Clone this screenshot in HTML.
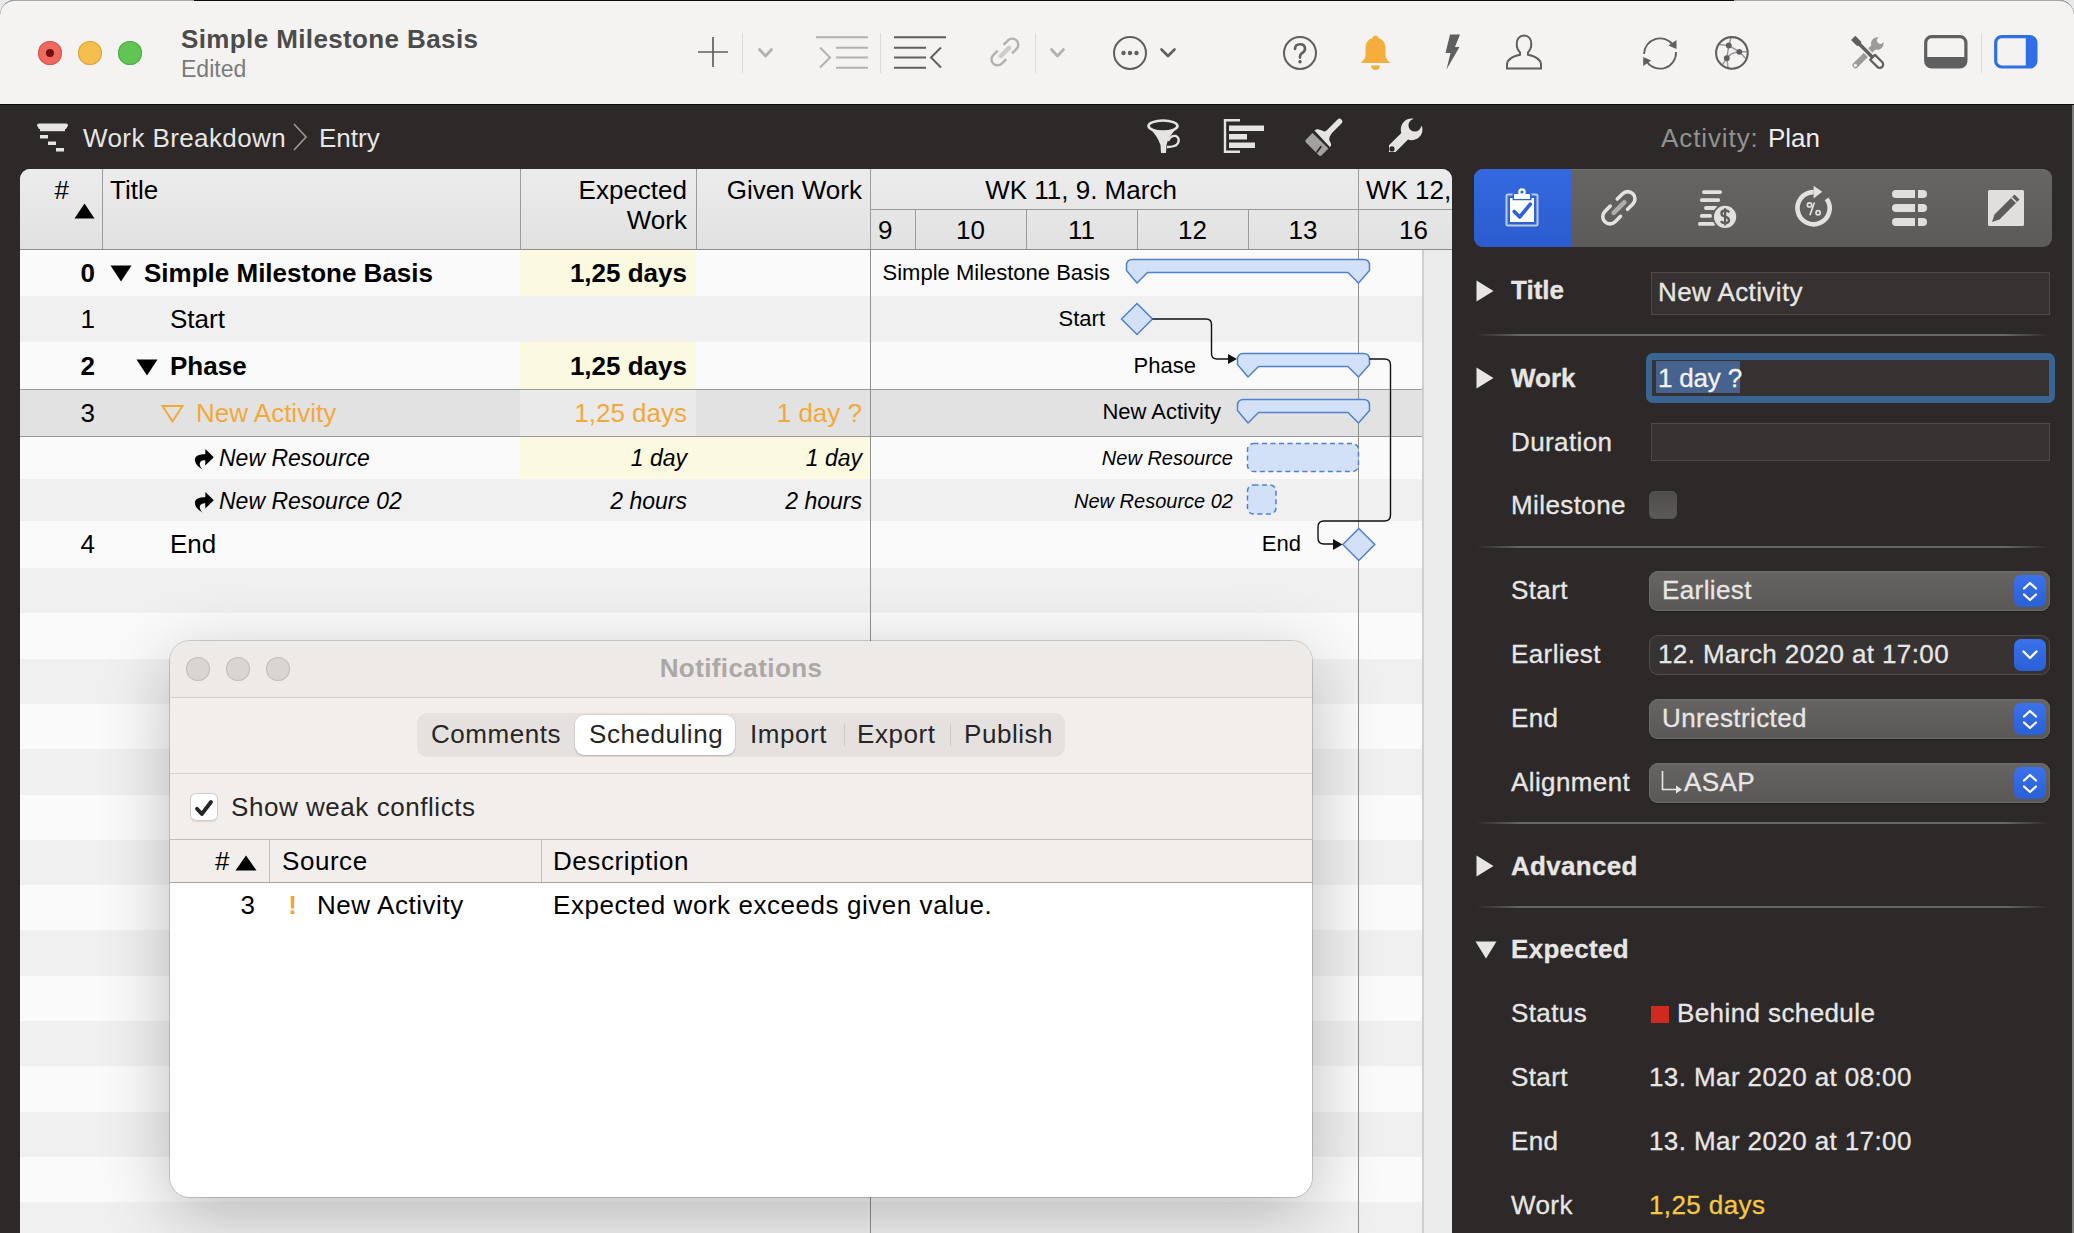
<!DOCTYPE html>
<html><head><meta charset="utf-8">
<style>
*{margin:0;padding:0;box-sizing:border-box}
html,body{width:2074px;height:1233px;overflow:hidden;background:#e9e9e9;font-family:"Liberation Sans",sans-serif}
.a{position:absolute}
.t{position:absolute;white-space:nowrap}
.dk .t{-webkit-text-stroke:0.3px currentColor}
svg{overflow:visible}
</style></head><body>
<div class="a" style="left:0px;top:0px;width:2074px;height:1233px;background:#2c2928;border-radius:15px 15px 0 0;"></div>
<div class="a" style="left:0px;top:0px;width:2074px;height:105px;background:#f5f3f2;border-radius:15px 15px 0 0;border-top:1px solid #a9a9a9;"></div>
<div class="a" style="left:0px;top:104px;width:2074px;height:1px;background:#0b0b0b;"></div>
<div class="a" style="left:194px;top:0px;width:1540px;height:1px;background:#0a0a0a;"></div>
<div class="a" style="left:38px;top:41px;width:24px;height:24px;background:#ee6a5f;border-radius:50%;box-shadow:inset 0 0 0 1px #d5574b;"></div>
<div class="a" style="left:78px;top:41px;width:24px;height:24px;background:#f5bf4f;border-radius:50%;box-shadow:inset 0 0 0 1px #d9a23a;"></div>
<div class="a" style="left:118px;top:41px;width:24px;height:24px;background:#61c554;border-radius:50%;box-shadow:inset 0 0 0 1px #4ea843;"></div>
<div class="a" style="left:46px;top:49px;width:8px;height:8px;background:#6e100b;border-radius:50%;"></div>
<div class="t" style="left:181px;top:25.99px;font-size:26px;line-height:26px;color:#4b4b4b;font-weight:bold;font-style:normal;letter-spacing:0.38px;">Simple Milestone Basis</div>
<div class="t" style="left:181px;top:57.53px;font-size:23px;line-height:23px;color:#7a7a7a;font-weight:normal;font-style:normal;">Edited</div>
<div class="t" style="left:83px;top:124.99px;font-size:26px;line-height:26px;color:#e8e6e5;font-weight:normal;font-style:normal;letter-spacing:0.4px;">Work Breakdown</div>
<div class="t" style="left:319px;top:124.99px;font-size:26px;line-height:26px;color:#e8e6e5;font-weight:normal;font-style:normal;">Entry</div>
<svg class="a" style="left:292px;top:123px;" width="16" height="28" viewBox="0 0 16 28"><path d="M2 1 L14 14 L2 27" fill="none" stroke="#9a9897" stroke-width="1.6"/></svg>
<div class="t" style="left:1661px;top:124.99px;font-size:26px;line-height:26px;color:#939190;font-weight:normal;font-style:normal;letter-spacing:0.9px;">Activity:</div>
<div class="t" style="left:1768px;top:124.99px;font-size:26px;line-height:26px;color:#efeeed;font-weight:normal;font-style:normal;">Plan</div>
<div class="a" style="left:20px;top:169px;width:1432px;height:1064px;background:#f0f0f0;border-radius:10px 10px 0 0;overflow:hidden;"></div>
<svg class="a" style="left:697px;top:36px;" width="32" height="32" viewBox="0 0 32 32"><path d="M16 1V31M1 16H31" stroke="#5f5f5f" stroke-width="1.7"/></svg>
<div class="a" style="left:742px;top:33px;width:1px;height:40px;background:#dcdad9;"></div>
<svg class="a" style="left:758px;top:48px;" width="15" height="10" viewBox="0 0 15 10"><path d="M1.5 1.5L7.5 8L13.5 1.5" fill="none" stroke="#b3b1b0" stroke-width="2.8" stroke-linecap="round" stroke-linejoin="round"/></svg>
<svg class="a" style="left:815px;top:36px;" width="54" height="34" viewBox="0 0 54 34"><path d="M1 1.3H53M21 11.8H53M21 21.6H53M21 31.8H53" stroke="#b3b1b0" stroke-width="2"/><path d="M5 11.5L15 21.5L5 31.5" fill="none" stroke="#b3b1b0" stroke-width="2"/></svg>
<div class="a" style="left:880px;top:33px;width:1px;height:40px;background:#dcdad9;"></div>
<svg class="a" style="left:893px;top:36px;" width="54" height="34" viewBox="0 0 54 34"><path d="M1 1.3H53M1 11.8H33M1 21.6H33M1 31.8H33" stroke="#5f5f5f" stroke-width="2"/><path d="M48 11.5L38 21.5L48 31.5" fill="none" stroke="#5f5f5f" stroke-width="2"/></svg>
<svg class="a" style="left:980px;top:28px;" width="50" height="50" viewBox="0 0 50 50"><g transform="translate(24.4 24.5) rotate(-45) scale(0.83)" fill="none"><path d="M5.8 -7.25H13.35A7.25 7.25 0 0 1 13.35 7.25H5.8M-4.1 -7.25H-11.75A7.25 7.25 0 0 0 -11.75 7.25H-4.1" stroke="#b3b1b0" stroke-width="2.9"/><path d="M-6 0H8" stroke="#cfcdcc" stroke-width="5.4" stroke-linecap="round"/></g></svg>
<div class="a" style="left:1035px;top:33px;width:1px;height:40px;background:#dcdad9;"></div>
<svg class="a" style="left:1050px;top:48px;" width="15" height="10" viewBox="0 0 15 10"><path d="M1.5 1.5L7.5 8L13.5 1.5" fill="none" stroke="#b3b1b0" stroke-width="2.8" stroke-linecap="round" stroke-linejoin="round"/></svg>
<svg class="a" style="left:1113px;top:36px;" width="34" height="34" viewBox="0 0 34 34"><circle cx="17" cy="17" r="16" fill="none" stroke="#5f5f5f" stroke-width="2"/><circle cx="10.5" cy="17" r="2.2" fill="#5f5f5f"/><circle cx="17" cy="17" r="2.2" fill="#5f5f5f"/><circle cx="23.5" cy="17" r="2.2" fill="#5f5f5f"/></svg>
<svg class="a" style="left:1160px;top:48px;" width="16" height="10" viewBox="0 0 16 10"><path d="M1.5 1.5L8.0 8L14.5 1.5" fill="none" stroke="#5f5f5f" stroke-width="2.6" stroke-linecap="round" stroke-linejoin="round"/></svg>
<svg class="a" style="left:1283px;top:36px;" width="34" height="34" viewBox="0 0 34 34"><circle cx="17" cy="17" r="16" fill="none" stroke="#5f5f5f" stroke-width="2"/></svg>
<svg class="a" style="left:1283px;top:36px;" width="34" height="34" viewBox="0 0 34 34"><path d="M12 13Q12 8.3 17 8.3Q22 8.3 22 12.8Q22 15.5 19.2 17Q17 18.2 17 20.6V21.6" fill="none" stroke="#5f5f5f" stroke-width="2.6" stroke-linecap="round"/><circle cx="17" cy="25.8" r="1.7" fill="#5f5f5f"/></svg>
<svg class="a" style="left:1359px;top:34px;" width="33" height="38" viewBox="0 0 33 38"><path d="M16.5 1.5c1.6 0 2.8 1.2 2.8 2.6 4.6 1.2 7.2 5 7.2 10.2v6.5c0 3 1.4 5.2 4.8 8.3H1.7c3.4-3.1 4.8-5.3 4.8-8.3v-6.5c0-5.2 2.6-9 7.2-10.2 0-1.4 1.2-2.6 2.8-2.6z" fill="#f5ad3c"/><path d="M12 31.5h9a4.5 4.5 0 0 1-9 0z" fill="#f5ad3c"/></svg>
<svg class="a" style="left:1443px;top:34px;" width="18" height="36" viewBox="0 0 18 36"><path d="M7 0.5H17L12 13H16.5L3.5 35.5L7.5 19H2.5Z" fill="#5f5f5f"/></svg>
<svg class="a" style="left:1505px;top:34px;" width="38" height="36" viewBox="0 0 38 36"><path d="M19 1.5c-4.6 0-7.3 3.7-7.3 8.6 0 3.2 1.3 6.3 3.3 8.3v2.3c-7 1.6-13 4.2-13 9.8v3.9h34v-3.9c0-5.6-6-8.2-13-9.8v-2.3c2-2 3.3-5.1 3.3-8.3 0-4.9-2.7-8.6-7.3-8.6z" fill="none" stroke="#5f5f5f" stroke-width="2"/></svg>
<svg class="a" style="left:1642px;top:35px;" width="36" height="36" viewBox="0 0 36 36"><path d="M2 19A16 16 0 0 1 31 10M34 17A16 16 0 0 1 5 27" fill="none" stroke="#5f5f5f" stroke-width="1.8"/><path d="M34.5 5L34.5 14L26.5 10.5Z" fill="#5f5f5f"/><path d="M1.2 31L1.2 22L9.2 25.5Z" fill="#5f5f5f"/></svg>
<svg class="a" style="left:1714px;top:35px;" width="36" height="36" viewBox="0 0 36 36"><clipPath id="gc"><circle cx="17.9" cy="17.9" r="15"/></clipPath><g clip-path="url(#gc)" fill="none" stroke="#9a9898" stroke-width="1.5"><path d="M14.8 10.5L17.8 0M14.8 10.5L4 9.4M14.8 10.5L25.3 16.8M14.8 10.5L12.8 23.2M12.8 23.2Q17 17.5 25.3 16.8M25.3 16.8H36M25.3 16.8L34 26M12.8 23.2L7 32M12.8 23.2L14.5 36"/></g><circle cx="17.9" cy="17.9" r="15.8" fill="none" stroke="#5f5f5f" stroke-width="2.1"/><circle cx="14.8" cy="10.5" r="2.9" fill="#5f5f5f"/><circle cx="25.3" cy="16.8" r="2.9" fill="#5f5f5f"/><circle cx="12.8" cy="23.2" r="2.9" fill="#5f5f5f"/></svg>
<svg class="a" style="left:1840px;top:25px;" width="60" height="55" viewBox="0 0 60 55"><mask id="tm" maskUnits="userSpaceOnUse" x="-5" y="-5" width="70" height="65"><rect x="-5" y="-5" width="70" height="65" fill="#fff"/><g transform="translate(15.4 40.4) rotate(-45)"><circle cx="0" cy="0" r="1.6" fill="#000"/><circle cx="35.3" cy="0" r="3.4" fill="#000"/><path d="M35.3 0H42" stroke="#000" stroke-width="5.4"/></g><g transform="translate(13.2 12.9) rotate(45)" stroke="#000" fill="#000"><path d="M0 -3H8L9.5 -1.9V1.9L8 3H0Z" stroke-width="2.4"/><path d="M8 0H26" stroke-width="6.2"/><rect x="26.3" y="-4.5" width="15.2" height="9" rx="4" stroke-width="2.6"/></g></mask><g mask="url(#tm)"><g transform="translate(15.4 40.4) rotate(-45)" fill="#9d9b9a"><path d="M0 0H28" stroke="#9d9b9a" stroke-width="5.8" stroke-linecap="round"/><circle cx="31" cy="0" r="6.3"/></g></g><g transform="translate(13.2 12.9) rotate(45)" fill="#5f5f5f"><path d="M0 -3H8L9.5 -1.9V1.9L8 3H0Z"/><rect x="8" y="-1.7" width="19" height="3.4"/><path d="M27.4 -3.4H37.6A3.4 3.4 0 0 1 37.6 3.4H27.4Z" fill="#f5f3f2" stroke="#5f5f5f" stroke-width="2.2" stroke-linejoin="round"/></g></svg>
<svg class="a" style="left:1924px;top:35px;" width="44" height="34" viewBox="0 0 44 34"><rect x="1.7" y="1.7" width="40.2" height="30.3" rx="6" fill="none" stroke="#5f5f5f" stroke-width="3.2"/><rect x="2.5" y="22" width="38.6" height="9.3" fill="#5f5f5f"/></svg>
<div class="a" style="left:1981px;top:33px;width:1px;height:40px;background:#dcdad9;"></div>
<svg class="a" style="left:1994px;top:35px;" width="44" height="34" viewBox="0 0 44 34"><rect x="1.7" y="1.7" width="40.2" height="30.3" rx="6" fill="none" stroke="#2f6fe6" stroke-width="3.2"/><rect x="31.8" y="2.5" width="9.3" height="28.8" fill="#2f6fe6"/></svg>
<svg class="a" style="left:36px;top:123px;" width="33" height="29" viewBox="0 0 33 29"><path d="M1 2.5Q1 0.5 3 0.5H30Q32 0.5 32 2.5L30 6H3Z" fill="#e6e4e3"/><rect x="4" y="6" width="25" height="2.2" fill="#e6e4e3"/><rect x="4" y="12" width="8" height="3.5" fill="#e6e4e3"/><rect x="12" y="18.5" width="8" height="3.5" fill="#e6e4e3"/><rect x="20" y="25" width="8" height="3.5" fill="#e6e4e3"/></svg>
<svg class="a" style="left:1147px;top:119px;" width="34" height="35" viewBox="0 0 34 35"><ellipse cx="16" cy="7" rx="14.5" ry="5.5" fill="none" stroke="#e6e4e3" stroke-width="2.6"/><path d="M2 9Q10 16 13.5 26L14 34H19L19.5 26Q21 18 30 9Q22 13 16 13Q9 13 2 9Z" fill="#e6e4e3"/><path d="M21 22Q24 16 29 17Q33 19 31 24Q29 28 20 28" fill="none" stroke="#e6e4e3" stroke-width="2.4"/></svg>
<svg class="a" style="left:1223px;top:119px;" width="42" height="34" viewBox="0 0 42 34"><path d="M17 1.3H2V32.7H17" fill="none" stroke="#e6e4e3" stroke-width="2.4"/><rect x="6" y="6.5" width="35" height="5.5" fill="#e6e4e3"/><rect x="6" y="15" width="18" height="5.5" fill="#e6e4e3"/><rect x="6" y="23.5" width="26" height="5.5" fill="#e6e4e3"/></svg>
<svg class="a" style="left:1295px;top:110px;" width="50" height="50" viewBox="0 0 50 50"><path d="M44.5 11.5L34 22" stroke="#e6e4e3" stroke-width="5.5" stroke-linecap="round"/><path d="M19.5 20.5Q22 18.5 25.5 20L29.5 21.5L33 20Q36.5 20 36.5 23.5L34.5 27Q33.5 29.5 35.5 32.5Q37 35.5 34.8 37Z" fill="#e6e4e3"/><path d="M17.5 23L33.5 38.5L26.5 45.5Q25 46.5 23.5 45L11 32.5Q9.5 31 11 29.5Z" fill="#a3a1a0"/><path d="M22 42L25.8 36.8" stroke="#2c2928" stroke-width="1.8" stroke-linecap="round"/></svg>
<svg class="a" style="left:1386px;top:118px;" width="38" height="38" viewBox="0 0 38 38"><mask id="wm"><rect x="-2" y="-2" width="42" height="42" fill="#fff"/><circle cx="6" cy="30.9" r="2.6" fill="#000"/><circle cx="28.8" cy="7.2" r="6.3" fill="#000"/><path d="M28.8 7.2L42 -6" stroke="#000" stroke-width="11"/></mask><g mask="url(#wm)"><path d="M6 30.9L25 12" stroke="#e6e4e3" stroke-width="9.4" stroke-linecap="round"/><circle cx="25.6" cy="11.4" r="10.8" fill="#e6e4e3"/></g></svg>
<div class="a" style="left:20px;top:169px;width:1432px;height:80px;background:linear-gradient(#ececec,#e1e1e1);border-radius:10px 10px 0 0;"></div>
<div class="a" style="left:20px;top:249px;width:1432px;height:1px;background:#8e8e8e;"></div>
<div class="a" style="left:102px;top:169px;width:1px;height:80px;background:#9b9b9b;"></div>
<div class="a" style="left:520px;top:169px;width:1px;height:80px;background:#9b9b9b;"></div>
<div class="a" style="left:696px;top:169px;width:1px;height:80px;background:#9b9b9b;"></div>
<div class="a" style="left:870px;top:169px;width:1px;height:80px;background:#9b9b9b;"></div>
<div class="a" style="left:870px;top:209px;width:582px;height:1px;background:#9b9b9b;"></div>
<div class="a" style="left:915px;top:209px;width:1px;height:40px;background:#9b9b9b;"></div>
<div class="a" style="left:1026px;top:209px;width:1px;height:40px;background:#9b9b9b;"></div>
<div class="a" style="left:1137px;top:209px;width:1px;height:40px;background:#9b9b9b;"></div>
<div class="a" style="left:1248px;top:209px;width:1px;height:40px;background:#9b9b9b;"></div>
<div class="a" style="left:1358px;top:169px;width:1px;height:80px;background:#9b9b9b;"></div>
<div class="t" style="left:-1131px;width:1200px;text-align:right;top:176.99px;font-size:26px;line-height:26px;color:#000;font-weight:normal;font-style:normal;">#</div>
<svg class="a" style="left:74px;top:203px;" width="21" height="16" viewBox="0 0 21 16"><path d="M10.5 0.5L20.5 15.5H0.5Z" fill="#000"/></svg>
<div class="t" style="left:110px;top:176.99px;font-size:26px;line-height:26px;color:#000;font-weight:normal;font-style:normal;">Title</div>
<div class="t" style="left:-513px;width:1200px;text-align:right;top:176.99px;font-size:26px;line-height:26px;color:#000;font-weight:normal;font-style:normal;">Expected</div>
<div class="t" style="left:-513px;width:1200px;text-align:right;top:206.99px;font-size:26px;line-height:26px;color:#000;font-weight:normal;font-style:normal;">Work</div>
<div class="t" style="left:-338px;width:1200px;text-align:right;top:176.99px;font-size:26px;line-height:26px;color:#000;font-weight:normal;font-style:normal;">Given Work</div>
<div class="t" style="left:481.0px;width:1200px;text-align:center;top:176.99px;font-size:26px;line-height:26px;color:#000;font-weight:normal;font-style:normal;">WK 11, 9. March</div>
<div class="t" style="left:1366px;top:176.99px;font-size:26px;line-height:26px;color:#000;font-weight:normal;font-style:normal;">WK 12,</div>
<div class="t" style="left:878px;top:216.99px;font-size:26px;line-height:26px;color:#000;font-weight:normal;font-style:normal;">9</div>
<div class="t" style="left:370.5px;width:1200px;text-align:center;top:216.99px;font-size:26px;line-height:26px;color:#000;font-weight:normal;font-style:normal;">10</div>
<div class="t" style="left:481.5px;width:1200px;text-align:center;top:216.99px;font-size:26px;line-height:26px;color:#000;font-weight:normal;font-style:normal;">11</div>
<div class="t" style="left:592.5px;width:1200px;text-align:center;top:216.99px;font-size:26px;line-height:26px;color:#000;font-weight:normal;font-style:normal;">12</div>
<div class="t" style="left:703.0px;width:1200px;text-align:center;top:216.99px;font-size:26px;line-height:26px;color:#000;font-weight:normal;font-style:normal;">13</div>
<div class="t" style="left:813.5px;width:1200px;text-align:center;top:216.99px;font-size:26px;line-height:26px;color:#000;font-weight:normal;font-style:normal;">16</div>
<div class="a" style="left:20px;top:249px;width:1402px;height:47.2px;background:#fafafa;"></div>
<div class="a" style="left:20px;top:296px;width:1402px;height:46.2px;background:#f0f0f0;"></div>
<div class="a" style="left:20px;top:342px;width:1402px;height:47.2px;background:#fafafa;"></div>
<div class="a" style="left:20px;top:389px;width:1402px;height:47.2px;background:#e2e2e2;"></div>
<div class="a" style="left:20px;top:436px;width:1402px;height:43.2px;background:#fafafa;"></div>
<div class="a" style="left:20px;top:479px;width:1402px;height:42.2px;background:#f0f0f0;"></div>
<div class="a" style="left:20px;top:521px;width:1402px;height:47.2px;background:#fafafa;"></div>
<div class="a" style="left:20px;top:568px;width:1402px;height:45.5px;background:#f0f0f0;"></div>
<div class="a" style="left:20px;top:613.3px;width:1402px;height:45.5px;background:#fafafa;"></div>
<div class="a" style="left:20px;top:658.6px;width:1402px;height:45.5px;background:#f0f0f0;"></div>
<div class="a" style="left:20px;top:703.9px;width:1402px;height:45.5px;background:#fafafa;"></div>
<div class="a" style="left:20px;top:749.2px;width:1402px;height:45.5px;background:#f0f0f0;"></div>
<div class="a" style="left:20px;top:794.5px;width:1402px;height:45.5px;background:#fafafa;"></div>
<div class="a" style="left:20px;top:839.8px;width:1402px;height:45.5px;background:#f0f0f0;"></div>
<div class="a" style="left:20px;top:885.1px;width:1402px;height:45.5px;background:#fafafa;"></div>
<div class="a" style="left:20px;top:930.4px;width:1402px;height:45.5px;background:#f0f0f0;"></div>
<div class="a" style="left:20px;top:975.7px;width:1402px;height:45.5px;background:#fafafa;"></div>
<div class="a" style="left:20px;top:1021.0px;width:1402px;height:45.5px;background:#f0f0f0;"></div>
<div class="a" style="left:20px;top:1066.3px;width:1402px;height:45.5px;background:#fafafa;"></div>
<div class="a" style="left:20px;top:1111.6px;width:1402px;height:45.5px;background:#f0f0f0;"></div>
<div class="a" style="left:20px;top:1156.9px;width:1402px;height:45.5px;background:#fafafa;"></div>
<div class="a" style="left:20px;top:1202.2px;width:1402px;height:45.5px;background:#f0f0f0;"></div>
<div class="a" style="left:20px;top:249px;width:1432px;height:1px;background:#8e8e8e;"></div>
<div class="a" style="left:1422px;top:250px;width:30px;height:983px;background:#ececec;border-left:2px solid #cfcfcf;"></div>
<div class="a" style="left:520px;top:250px;width:176px;height:46px;background:#fbf9e0;"></div>
<div class="a" style="left:520px;top:342px;width:176px;height:47px;background:#fbf9e0;"></div>
<div class="a" style="left:520px;top:437px;width:350px;height:42px;background:#fbf9e0;"></div>
<div class="a" style="left:520px;top:390px;width:176px;height:46px;background:#eaeaea;"></div>
<div class="a" style="left:20px;top:389px;width:1402px;height:1px;background:#9a9a9a;"></div>
<div class="a" style="left:20px;top:436px;width:1402px;height:1px;background:#9a9a9a;"></div>
<div class="a" style="left:870px;top:250px;width:1px;height:983px;background:#8f8f8f;"></div>
<div class="a" style="left:1358px;top:250px;width:1px;height:983px;background:#8f8f8f;"></div>
<div class="t" style="left:-1105px;width:1200px;text-align:right;top:259.99px;font-size:26px;line-height:26px;color:#000;font-weight:bold;font-style:normal;">0</div>
<svg class="a" style="left:110px;top:265px;" width="22" height="17" viewBox="0 0 22 17"><path d="M0.5 0.5H21.5L11 16.5Z" fill="#000"/></svg>
<div class="t" style="left:144px;top:259.99px;font-size:26px;line-height:26px;color:#000;font-weight:bold;font-style:normal;">Simple Milestone Basis</div>
<div class="t" style="left:-513px;width:1200px;text-align:right;top:259.99px;font-size:26px;line-height:26px;color:#000;font-weight:bold;font-style:normal;">1,25 days</div>
<div class="t" style="left:-1105px;width:1200px;text-align:right;top:305.99px;font-size:26px;line-height:26px;color:#000;font-weight:normal;font-style:normal;">1</div>
<div class="t" style="left:170px;top:305.99px;font-size:26px;line-height:26px;color:#000;font-weight:normal;font-style:normal;">Start</div>
<div class="t" style="left:-1105px;width:1200px;text-align:right;top:352.99px;font-size:26px;line-height:26px;color:#000;font-weight:bold;font-style:normal;">2</div>
<svg class="a" style="left:136px;top:359px;" width="22" height="17" viewBox="0 0 22 17"><path d="M0.5 0.5H21.5L11 16.5Z" fill="#000"/></svg>
<div class="t" style="left:170px;top:352.99px;font-size:26px;line-height:26px;color:#000;font-weight:bold;font-style:normal;">Phase</div>
<div class="t" style="left:-513px;width:1200px;text-align:right;top:352.99px;font-size:26px;line-height:26px;color:#000;font-weight:bold;font-style:normal;">1,25 days</div>
<div class="t" style="left:-1105px;width:1200px;text-align:right;top:399.99px;font-size:26px;line-height:26px;color:#000;font-weight:normal;font-style:normal;">3</div>
<svg class="a" style="left:161px;top:405px;" width="23" height="18" viewBox="0 0 23 18"><path d="M1.5 1H21.5L11.5 16.5Z" fill="none" stroke="#f2a93b" stroke-width="2"/></svg>
<div class="t" style="left:196px;top:399.99px;font-size:26px;line-height:26px;color:#f2a93b;font-weight:normal;font-style:normal;">New Activity</div>
<div class="t" style="left:-513px;width:1200px;text-align:right;top:399.99px;font-size:26px;line-height:26px;color:#f2a93b;font-weight:normal;font-style:normal;">1,25 days</div>
<div class="t" style="left:-338px;width:1200px;text-align:right;top:399.99px;font-size:26px;line-height:26px;color:#f2a93b;font-weight:normal;font-style:normal;">1 day ?</div>
<svg class="a" style="left:194px;top:449px;" width="21" height="22" viewBox="0 0 21 22"><path d="M11.4 0L19.8 8.3L11.3 16.6V11.2C8 11 5.5 12.5 5.8 15.5C6 17.5 7.5 19.5 8.8 20.8C3.5 17.5 0.8 14 0.9 10.5C1 7 5 5.2 11.3 5.2Z" fill="#000"/></svg>
<div class="t" style="left:219px;top:446.53px;font-size:23px;line-height:23px;color:#000;font-weight:normal;font-style:italic;">New Resource</div>
<div class="t" style="left:-513px;width:1200px;text-align:right;top:446.53px;font-size:23px;line-height:23px;color:#000;font-weight:normal;font-style:italic;">1 day</div>
<div class="t" style="left:-338px;width:1200px;text-align:right;top:446.53px;font-size:23px;line-height:23px;color:#000;font-weight:normal;font-style:italic;">1 day</div>
<svg class="a" style="left:194px;top:492px;" width="21" height="22" viewBox="0 0 21 22"><path d="M11.4 0L19.8 8.3L11.3 16.6V11.2C8 11 5.5 12.5 5.8 15.5C6 17.5 7.5 19.5 8.8 20.8C3.5 17.5 0.8 14 0.9 10.5C1 7 5 5.2 11.3 5.2Z" fill="#000"/></svg>
<div class="t" style="left:219px;top:489.53px;font-size:23px;line-height:23px;color:#000;font-weight:normal;font-style:italic;">New Resource 02</div>
<div class="t" style="left:-513px;width:1200px;text-align:right;top:489.53px;font-size:23px;line-height:23px;color:#000;font-weight:normal;font-style:italic;">2 hours</div>
<div class="t" style="left:-338px;width:1200px;text-align:right;top:489.53px;font-size:23px;line-height:23px;color:#000;font-weight:normal;font-style:italic;">2 hours</div>
<div class="t" style="left:-1105px;width:1200px;text-align:right;top:530.99px;font-size:26px;line-height:26px;color:#000;font-weight:normal;font-style:normal;">4</div>
<div class="t" style="left:170px;top:530.99px;font-size:26px;line-height:26px;color:#000;font-weight:normal;font-style:normal;">End</div>
<svg class="a" style="left:0;top:0" width="2074" height="1233" viewBox="0 0 2074 1233"><path d="M1132.5 259.5 H1363.5 Q1369.5 259.5 1369.5 265.5 V270.5 L1358.5 283 L1348.0 272.5 H1147.5 L1137 283 L1126.5 270.5 V265.5 Q1126.5 259.5 1132.5 259.5 Z" fill="#d3e1f8" stroke="#4f81cf" stroke-width="1.5" stroke-linejoin="round"/><path d="M1243.5 353.5 H1363.5 Q1369.5 353.5 1369.5 359.5 V364.5 L1358.5 377 L1348.0 366.5 H1258.5 L1248 377 L1237.5 364.5 V359.5 Q1237.5 353.5 1243.5 353.5 Z" fill="#d3e1f8" stroke="#4f81cf" stroke-width="1.5" stroke-linejoin="round"/><path d="M1243.5 399.5 H1363.5 Q1369.5 399.5 1369.5 405.5 V410.5 L1358.5 423 L1348.0 412.5 H1258.5 L1248 423 L1237.5 410.5 V405.5 Q1237.5 399.5 1243.5 399.5 Z" fill="#d3e1f8" stroke="#4f81cf" stroke-width="1.5" stroke-linejoin="round"/><path d="M1137 303.5L1152.5 319L1137 334.5L1121.5 319Z" fill="#d3e1f8" stroke="#4f81cf" stroke-width="1.5"/><path d="M1358.8 528.5L1374.8 544.5L1358.8 560.5L1342.8 544.5Z" fill="#d3e1f8" stroke="#4f81cf" stroke-width="1.5"/><rect x="1247.5" y="443.5" width="111" height="28" rx="6" fill="#d3e1f8" stroke="#4f81cf" stroke-width="1.5" stroke-dasharray="5 3.5"/><rect x="1247.5" y="485" width="28.5" height="29" rx="6" fill="#d3e1f8" stroke="#4f81cf" stroke-width="1.5" stroke-dasharray="5 3.5"/><path d="M1152.5 319H1206Q1211.5 319 1211.5 324.5V353.5Q1211.5 359 1217 359H1229" fill="none" stroke="#111" stroke-width="1.4"/><path d="M1228 354L1237 359L1228 364Z" fill="#111"/><path d="M1369.5 359H1384.5Q1390.5 359 1390.5 365V515Q1390.5 521 1384.5 521H1324Q1318 521 1318 527V538Q1318 544 1324 544H1334" fill="none" stroke="#111" stroke-width="1.4"/><path d="M1333 539L1342.5 544.5L1333 550Z" fill="#111"/></svg>
<div class="t" style="left:-90px;width:1200px;text-align:right;top:262.37px;font-size:22px;line-height:22px;color:#000;font-weight:normal;font-style:normal;">Simple Milestone Basis</div>
<div class="t" style="left:-95px;width:1200px;text-align:right;top:308.37px;font-size:22px;line-height:22px;color:#000;font-weight:normal;font-style:normal;">Start</div>
<div class="t" style="left:-4px;width:1200px;text-align:right;top:355.37px;font-size:22px;line-height:22px;color:#000;font-weight:normal;font-style:normal;">Phase</div>
<div class="t" style="left:21px;width:1200px;text-align:right;top:401.37px;font-size:22px;line-height:22px;color:#000;font-weight:normal;font-style:normal;">New Activity</div>
<div class="t" style="left:33px;width:1200px;text-align:right;top:448.07px;font-size:20px;line-height:20px;color:#000;font-weight:normal;font-style:italic;">New Resource</div>
<div class="t" style="left:33px;width:1200px;text-align:right;top:490.57px;font-size:20px;line-height:20px;color:#000;font-weight:normal;font-style:italic;">New Resource 02</div>
<div class="t" style="left:101px;width:1200px;text-align:right;top:533.37px;font-size:22px;line-height:22px;color:#000;font-weight:normal;font-style:normal;">End</div>
<div class="a" style="left:170px;top:641px;width:1142px;height:556px;border-radius:20px;box-shadow:0 18px 70px rgba(0,0,0,0.24),0 0 0 1px rgba(0,0,0,0.16);background:#f2eeec;overflow:hidden;"></div>
<div class="a" style="left:170px;top:641px;width:1142px;height:56px;background:#eeeae8;border-radius:20px 20px 0 0;"></div>
<div class="a" style="left:170px;top:697px;width:1142px;height:1px;background:#d3cfcd;"></div>
<div class="a" style="left:170px;top:773px;width:1142px;height:1px;background:#d8d4d2;"></div>
<div class="a" style="left:186px;top:657px;width:24px;height:24px;background:#d9d5d3;border-radius:50%;box-shadow:inset 0 0 0 1px #c3bfbd;"></div>
<div class="a" style="left:226px;top:657px;width:24px;height:24px;background:#d9d5d3;border-radius:50%;box-shadow:inset 0 0 0 1px #c3bfbd;"></div>
<div class="a" style="left:266px;top:657px;width:24px;height:24px;background:#d9d5d3;border-radius:50%;box-shadow:inset 0 0 0 1px #c3bfbd;"></div>
<div class="t" style="left:141.0px;width:1200px;text-align:center;top:654.99px;font-size:26px;line-height:26px;color:#aca8a6;font-weight:bold;font-style:normal;letter-spacing:0.4px;">Notifications</div>
<div class="a" style="left:417px;top:713px;width:648px;height:44px;background:#e5e1df;border-radius:10px;"></div>
<div class="a" style="left:575px;top:715px;width:160px;height:40px;background:#fff;border-radius:9px;box-shadow:0 1px 2px rgba(0,0,0,0.18),0 0 0 0.5px rgba(0,0,0,0.08);"></div>
<div class="a" style="left:844px;top:724px;width:1px;height:22px;background:#cdc9c7;"></div>
<div class="a" style="left:950px;top:724px;width:1px;height:22px;background:#cdc9c7;"></div>
<div class="t" style="left:431px;top:720.99px;font-size:26px;line-height:26px;color:#262626;font-weight:normal;font-style:normal;letter-spacing:0.55px;">Comments</div>
<div class="t" style="left:589px;top:720.99px;font-size:26px;line-height:26px;color:#262626;font-weight:normal;font-style:normal;letter-spacing:0.55px;">Scheduling</div>
<div class="t" style="left:750px;top:720.99px;font-size:26px;line-height:26px;color:#262626;font-weight:normal;font-style:normal;letter-spacing:0.55px;">Import</div>
<div class="t" style="left:857px;top:720.99px;font-size:26px;line-height:26px;color:#262626;font-weight:normal;font-style:normal;letter-spacing:0.55px;">Export</div>
<div class="t" style="left:964px;top:720.99px;font-size:26px;line-height:26px;color:#262626;font-weight:normal;font-style:normal;letter-spacing:0.55px;">Publish</div>
<div class="a" style="left:190px;top:793px;width:28px;height:28px;background:#fff;border-radius:6px;box-shadow:inset 0 0 0 1px #cfcbc9,0 0.5px 1px rgba(0,0,0,0.1);"></div>
<svg class="a" style="left:194px;top:799px;" width="20" height="18" viewBox="0 0 20 18"><path d="M3 9.8L7.8 15L17 3" fill="none" stroke="#262626" stroke-width="3.8" stroke-linecap="round" stroke-linejoin="round"/></svg>
<div class="t" style="left:231px;top:794.49px;font-size:26px;line-height:26px;color:#262626;font-weight:normal;font-style:normal;letter-spacing:0.55px;">Show weak conflicts</div>
<div class="a" style="left:170px;top:839px;width:1142px;height:1px;background:#c2bebc;"></div>
<div class="a" style="left:170px;top:882px;width:1142px;height:1px;background:#a8a5a3;"></div>
<div class="a" style="left:269px;top:840px;width:1px;height:42px;background:#c2bebc;"></div>
<div class="a" style="left:541px;top:840px;width:1px;height:42px;background:#c2bebc;"></div>
<div class="a" style="left:170px;top:883px;width:1142px;height:314px;background:#fff;border-radius:0 0 20px 20px;"></div>
<div class="t" style="left:215px;top:848.49px;font-size:26px;line-height:26px;color:#000;font-weight:normal;font-style:normal;">#</div>
<svg class="a" style="left:235px;top:855px;" width="22" height="16" viewBox="0 0 22 16"><path d="M11 0.5L21.5 15.5H0.5Z" fill="#000"/></svg>
<div class="t" style="left:282px;top:848.49px;font-size:26px;line-height:26px;color:#000;font-weight:normal;font-style:normal;letter-spacing:0.55px;">Source</div>
<div class="t" style="left:553px;top:848.49px;font-size:26px;line-height:26px;color:#000;font-weight:normal;font-style:normal;letter-spacing:0.55px;">Description</div>
<div class="t" style="left:-945px;width:1200px;text-align:right;top:892.49px;font-size:26px;line-height:26px;color:#000;font-weight:normal;font-style:normal;">3</div>
<div class="t" style="left:-307.5px;width:1200px;text-align:center;top:892.49px;font-size:26px;line-height:26px;color:#f2a33a;font-weight:bold;font-style:normal;">!</div>
<div class="t" style="left:317px;top:892.49px;font-size:26px;line-height:26px;color:#000;font-weight:normal;font-style:normal;letter-spacing:0.55px;">New Activity</div>
<div class="t" style="left:553px;top:892.49px;font-size:26px;line-height:26px;color:#000;font-weight:normal;font-style:normal;letter-spacing:0.55px;">Expected work exceeds given value.</div>
<div class="dk">
<div class="a" style="left:2072px;top:105px;width:2px;height:1128px;background:#7d7b7a;"></div>
<div class="a" style="left:1474px;top:169px;width:578px;height:78px;background:linear-gradient(#676564,#5d5b5a);border-radius:9px;box-shadow:inset 0 1px 0 rgba(255,255,255,0.08);"></div>
<div class="a" style="left:1474px;top:169px;width:97px;height:78px;background:linear-gradient(#3469e0,#2c5ccf);border-radius:9px 0 0 9px;"></div>
<svg class="a" style="left:1505px;top:187px;" width="34" height="40" viewBox="0 0 34 40"><rect x="1.5" y="7.5" width="31" height="31" rx="1.5" fill="none" stroke="#b9ccf3" stroke-width="2"/><rect x="5" y="11" width="24" height="24" fill="#fff"/><path d="M7.5 13.2V7.5Q7.5 6 9 6H25Q26.5 6 26.5 7.5V13.2Z" fill="#2f62d8"/><path d="M9 12V8Q9 7 10 7H24Q25 7 25 8V12Z" fill="#fff"/><circle cx="17" cy="5" r="3.8" fill="#fff"/><circle cx="17" cy="5" r="1.6" fill="#2f62d8"/><path d="M9.2 24.5L14.7 30L25.3 17.2" fill="none" stroke="#2f62d8" stroke-width="3.6" stroke-linecap="round" stroke-linejoin="round"/></svg>
<svg class="a" style="left:1590px;top:180px;" width="60" height="55" viewBox="0 0 60 55"><g transform="translate(28.3 28.3) rotate(-45)" fill="none"><path d="M5.8 -7.25H13.35A7.25 7.25 0 0 1 13.35 7.25H5.8M-4.1 -7.25H-11.75A7.25 7.25 0 0 0 -11.75 7.25H-4.1" stroke="#e4e3e2" stroke-width="3.6" stroke-linecap="round"/><path d="M-6.5 0H8.5" stroke="#aeadac" stroke-width="4.6" stroke-linecap="round"/></g></svg>
<svg class="a" style="left:1680px;top:175px;" width="60" height="60" viewBox="0 0 60 60"><g fill="#e2e1e0"><rect x="22" y="15.2" width="20" height="3.8" rx="1.9"/><rect x="19.9" y="23.2" width="20.3" height="3.8" rx="1.9"/><rect x="24" y="31.1" width="13.7" height="3.8" rx="1.9"/><rect x="19.9" y="39" width="12.1" height="3.8" rx="1.9"/><rect x="18" y="47" width="17.2" height="3.8" rx="1.9"/></g><circle cx="45.1" cy="41.8" r="12.8" fill="#62605f"/><circle cx="45.1" cy="41.8" r="11.1" fill="#e2e1e0"/><path d="M49.3 37.3Q48 35.5 45.2 35.5Q41.4 35.5 41.4 38.5Q41.4 40.8 45.1 41.6Q49 42.5 49 45.3Q49 48.2 45.1 48.2Q42.1 48.2 40.8 46.2M45.1 33.2V50.4" fill="none" stroke="#5f5d5c" stroke-width="2.3"/></svg>
<svg class="a" style="left:1780px;top:180px;" width="60" height="55" viewBox="0 0 60 55"><path d="M46.67 18.81A16.1 16.1 0 1 1 33.6 12.1" fill="none" stroke="#e2e1e0" stroke-width="4.6"/><path d="M33.6 5.7L42.2 11.8L33.6 18.4Z" fill="#e2e1e0"/><circle cx="29.5" cy="24.9" r="2.1" fill="none" stroke="#e2e1e0" stroke-width="1.7"/><circle cx="38.1" cy="32.7" r="2.1" fill="none" stroke="#e2e1e0" stroke-width="1.7"/><path d="M34.4 22.5L29.9 35.2" stroke="#e2e1e0" stroke-width="1.7"/></svg>
<svg class="a" style="left:1891px;top:190px;" width="37" height="37" viewBox="0 0 37 37"><g fill="#e0dfde"><path d="M5 0H24V8H5A4 4 0 0 1 5 0Z"/><path d="M27 0H32A4 4 0 0 1 32 8H27Z"/><path d="M5 14H24V22H5A4 4 0 0 1 5 14Z"/><path d="M27 14H32A4 4 0 0 1 32 22H27Z"/><path d="M5 28H24V36H5A4 4 0 0 1 5 28Z"/><path d="M27 28H32A4 4 0 0 1 32 36H27Z"/></g></svg>
<svg class="a" style="left:1988px;top:190px;" width="37" height="37" viewBox="0 0 37 37"><rect x="0" y="0" width="36" height="36" rx="1.5" fill="#e0dfde"/><path d="M4 32L6.5 24.5L26.5 4.5L31.5 9.5L11.5 29.5Z" fill="#5f5d5c"/><path d="M23.5 7.5L28.5 12.5" stroke="#e0dfde" stroke-width="1.6"/></svg>
<svg class="a" style="left:1476px;top:280px;" width="18" height="22" viewBox="0 0 18 22"><path d="M0.5 0.5L17.5 11L0.5 21.5Z" fill="#e8e6e5"/></svg>
<div class="t" style="left:1511px;top:277.49px;font-size:26px;line-height:26px;color:#e8e6e5;font-weight:bold;font-style:normal;">Title</div>
<div class="a" style="left:1651px;top:272px;width:399px;height:43px;background:#353231;border:1px solid #4d4a49;"></div>
<div class="t" style="left:1658px;top:279.49px;font-size:26px;line-height:26px;color:#e8e6e5;font-weight:normal;font-style:normal;letter-spacing:0.4px;">New Activity</div>
<div class="a" style="left:1476px;top:334px;width:574px;height:2px;background:linear-gradient(90deg,rgba(120,118,117,0) 0%,#6a6867 8%,#6a6867 92%,rgba(120,118,117,0) 100%);"></div>
<svg class="a" style="left:1476px;top:367px;" width="18" height="22" viewBox="0 0 18 22"><path d="M0.5 0.5L17.5 11L0.5 21.5Z" fill="#e8e6e5"/></svg>
<div class="t" style="left:1511px;top:364.99px;font-size:26px;line-height:26px;color:#e8e6e5;font-weight:bold;font-style:normal;">Work</div>
<div class="a" style="left:1646px;top:353px;width:409px;height:50px;border-radius:7px;background:#3a6592;"></div>
<div class="a" style="left:1652px;top:360px;width:397px;height:36px;background:#353231;"></div>
<div class="a" style="left:1656px;top:361px;width:84px;height:32px;background:#46638f;"></div>
<div class="t" style="left:1658px;top:364.99px;font-size:26px;line-height:26px;color:#f3f3f3;font-weight:normal;font-style:normal;letter-spacing:-0.2px;">1 day ?</div>
<div class="t" style="left:1511px;top:428.99px;font-size:26px;line-height:26px;color:#e8e6e5;font-weight:normal;font-style:normal;letter-spacing:0.4px;">Duration</div>
<div class="a" style="left:1651px;top:423px;width:399px;height:38px;background:#363332;border:1px solid #4d4a49;"></div>
<div class="t" style="left:1511px;top:492.49px;font-size:26px;line-height:26px;color:#e8e6e5;font-weight:normal;font-style:normal;letter-spacing:0.4px;">Milestone</div>
<div class="a" style="left:1649px;top:491px;width:28px;height:28px;background:linear-gradient(#4f4d4c,#5c5a59);border-radius:6px;box-shadow:inset 0 0 0 1px #555352;"></div>
<div class="a" style="left:1476px;top:546px;width:574px;height:2px;background:linear-gradient(90deg,rgba(120,118,117,0) 0%,#6a6867 8%,#6a6867 92%,rgba(120,118,117,0) 100%);"></div>
<div class="t" style="left:1511px;top:576.99px;font-size:26px;line-height:26px;color:#e8e6e5;font-weight:normal;font-style:normal;letter-spacing:0.4px;">Start</div>
<div class="a" style="left:1649px;top:571px;width:401px;height:40px;background:linear-gradient(#676564,#5a5857);box-shadow:inset 0 0 0 1px #6e6c6b,0 1px 1px rgba(0,0,0,0.3);border-radius:9px;"></div>
<div class="a" style="left:2014px;top:575px;width:32px;height:32px;background:linear-gradient(#3a72ea,#2b5fd6);border-radius:7px;"></div>
<svg class="a" style="left:2020px;top:581px;" width="20" height="21" viewBox="0 0 20 21"><path d="M4 7.5L10 2L16 7.5M4 13.5L10 19L16 13.5" fill="none" stroke="#fff" stroke-width="2.2" stroke-linecap="round" stroke-linejoin="round"/></svg>
<div class="t" style="left:1662px;top:576.99px;font-size:26px;line-height:26px;color:#e8e6e5;font-weight:normal;font-style:normal;letter-spacing:0.4px;">Earliest</div>
<div class="t" style="left:1511px;top:640.99px;font-size:26px;line-height:26px;color:#e8e6e5;font-weight:normal;font-style:normal;letter-spacing:0.4px;">Earliest</div>
<div class="a" style="left:1649px;top:635px;width:401px;height:40px;background:#363332;box-shadow:inset 0 0 0 1px #4f4c4b;border-radius:9px;"></div>
<div class="a" style="left:2014px;top:639px;width:32px;height:32px;background:linear-gradient(#3a72ea,#2b5fd6);border-radius:7px;"></div>
<svg class="a" style="left:2020px;top:649px;" width="20" height="12" viewBox="0 0 20 12"><path d="M3.5 2.5L10 9L16.5 2.5" fill="none" stroke="#fff" stroke-width="2.4" stroke-linecap="round" stroke-linejoin="round"/></svg>
<div class="t" style="left:1658px;top:640.99px;font-size:26px;line-height:26px;color:#e8e6e5;font-weight:normal;font-style:normal;letter-spacing:0.4px;">12. March 2020 at 17:00</div>
<div class="t" style="left:1511px;top:704.99px;font-size:26px;line-height:26px;color:#e8e6e5;font-weight:normal;font-style:normal;letter-spacing:0.4px;">End</div>
<div class="a" style="left:1649px;top:699px;width:401px;height:40px;background:linear-gradient(#676564,#5a5857);box-shadow:inset 0 0 0 1px #6e6c6b,0 1px 1px rgba(0,0,0,0.3);border-radius:9px;"></div>
<div class="a" style="left:2014px;top:703px;width:32px;height:32px;background:linear-gradient(#3a72ea,#2b5fd6);border-radius:7px;"></div>
<svg class="a" style="left:2020px;top:709px;" width="20" height="21" viewBox="0 0 20 21"><path d="M4 7.5L10 2L16 7.5M4 13.5L10 19L16 13.5" fill="none" stroke="#fff" stroke-width="2.2" stroke-linecap="round" stroke-linejoin="round"/></svg>
<div class="t" style="left:1662px;top:704.99px;font-size:26px;line-height:26px;color:#e8e6e5;font-weight:normal;font-style:normal;letter-spacing:0.4px;">Unrestricted</div>
<div class="t" style="left:1511px;top:768.99px;font-size:26px;line-height:26px;color:#e8e6e5;font-weight:normal;font-style:normal;letter-spacing:0.4px;">Alignment</div>
<div class="a" style="left:1649px;top:763px;width:401px;height:40px;background:linear-gradient(#676564,#5a5857);box-shadow:inset 0 0 0 1px #6e6c6b,0 1px 1px rgba(0,0,0,0.3);border-radius:9px;"></div>
<div class="a" style="left:2014px;top:767px;width:32px;height:32px;background:linear-gradient(#3a72ea,#2b5fd6);border-radius:7px;"></div>
<svg class="a" style="left:2020px;top:773px;" width="20" height="21" viewBox="0 0 20 21"><path d="M4 7.5L10 2L16 7.5M4 13.5L10 19L16 13.5" fill="none" stroke="#fff" stroke-width="2.2" stroke-linecap="round" stroke-linejoin="round"/></svg>
<svg class="a" style="left:1661px;top:770px;" width="22" height="26" viewBox="0 0 22 26"><path d="M1.5 1V19.5H18" fill="none" stroke="#e8e6e5" stroke-width="1.6"/><path d="M15 15.5L21 19.5L15 23.5Z" fill="#e8e6e5"/></svg>
<div class="t" style="left:1684px;top:768.99px;font-size:26px;line-height:26px;color:#e8e6e5;font-weight:normal;font-style:normal;letter-spacing:0.4px;">ASAP</div>
<div class="a" style="left:1476px;top:822px;width:574px;height:2px;background:linear-gradient(90deg,rgba(120,118,117,0) 0%,#6a6867 8%,#6a6867 92%,rgba(120,118,117,0) 100%);"></div>
<svg class="a" style="left:1476px;top:855px;" width="18" height="22" viewBox="0 0 18 22"><path d="M0.5 0.5L17.5 11L0.5 21.5Z" fill="#e8e6e5"/></svg>
<div class="t" style="left:1511px;top:852.99px;font-size:26px;line-height:26px;color:#e8e6e5;font-weight:bold;font-style:normal;letter-spacing:0.3px;">Advanced</div>
<div class="a" style="left:1476px;top:906px;width:574px;height:2px;background:linear-gradient(90deg,rgba(120,118,117,0) 0%,#6a6867 8%,#6a6867 92%,rgba(120,118,117,0) 100%);"></div>
<svg class="a" style="left:1475px;top:941px;" width="22" height="18" viewBox="0 0 22 18"><path d="M0.5 0.5H21.5L11 17.5Z" fill="#e8e6e5"/></svg>
<div class="t" style="left:1511px;top:935.99px;font-size:26px;line-height:26px;color:#e8e6e5;font-weight:bold;font-style:normal;letter-spacing:0.3px;">Expected</div>
<div class="t" style="left:1511px;top:1000.49px;font-size:26px;line-height:26px;color:#e8e6e5;font-weight:normal;font-style:normal;letter-spacing:0.4px;">Status</div>
<div class="a" style="left:1651px;top:1006px;width:18px;height:17px;background:#d02a1e;"></div>
<div class="t" style="left:1677px;top:1000.49px;font-size:26px;line-height:26px;color:#e8e6e5;font-weight:normal;font-style:normal;letter-spacing:0.4px;">Behind schedule</div>
<div class="t" style="left:1511px;top:1064.49px;font-size:26px;line-height:26px;color:#e8e6e5;font-weight:normal;font-style:normal;letter-spacing:0.4px;">Start</div>
<div class="t" style="left:1649px;top:1064.49px;font-size:26px;line-height:26px;color:#e8e6e5;font-weight:normal;font-style:normal;letter-spacing:0.4px;">13. Mar 2020 at 08:00</div>
<div class="t" style="left:1511px;top:1128.49px;font-size:26px;line-height:26px;color:#e8e6e5;font-weight:normal;font-style:normal;letter-spacing:0.4px;">End</div>
<div class="t" style="left:1649px;top:1128.49px;font-size:26px;line-height:26px;color:#e8e6e5;font-weight:normal;font-style:normal;letter-spacing:0.4px;">13. Mar 2020 at 17:00</div>
<div class="t" style="left:1511px;top:1192.49px;font-size:26px;line-height:26px;color:#e8e6e5;font-weight:normal;font-style:normal;letter-spacing:0.4px;">Work</div>
<div class="t" style="left:1649px;top:1192.49px;font-size:26px;line-height:26px;color:#f6c844;font-weight:normal;font-style:normal;letter-spacing:0.4px;">1,25 days</div>
</div>
</body></html>
